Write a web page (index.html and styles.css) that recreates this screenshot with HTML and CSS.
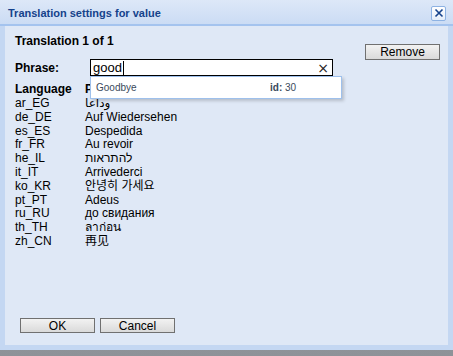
FILE: index.html
```html
<!DOCTYPE html>
<html lang="en">

<head>
    <meta charset="UTF-8">
    <meta name="viewport" content="width=device-width, initial-scale=1.0">
    <title>Translation settings for value</title>
    <link rel="stylesheet" href="styles.css">
</head>

<body>
    <div class="window">
        <div class="titlebar">
            <span class="title">Translation settings for value</span>
            <span class="close-btn">
                <svg width="10" height="10" viewBox="0 0 10 10">
                    <path d="M1.5 1.5 L8.5 8.5 M8.5 1.5 L1.5 8.5" stroke="#15428b" stroke-width="1.6" fill="none"/>
                </svg>
            </span>
        </div>

        <div class="window-body">
            <div class="top-row">
                <div class="heading">Translation 1 of 1</div>
                <button class="btn btn-remove">Remove</button>
            </div>

            <div class="phrase-row">
                <label class="label">Phrase:</label>
                <div class="combo">
                    <div class="combo-input">
                        <span class="combo-text">good</span><span class="caret"></span>
                        <span class="clear">×</span>
                    </div>
                    <div class="combo-list">
                        <span class="item-name">Goodbye</span>
                        <span class="item-id"><b>id:</b> 30</span>
                    </div>
                </div>
            </div>

            <table class="lang-table">
                <tr><th>Language</th><th>Phrase</th></tr>
                <tr><td>ar_EG</td><td>وداعا</td></tr>
                <tr><td>de_DE</td><td>Auf Wiedersehen</td></tr>
                <tr><td>es_ES</td><td>Despedida</td></tr>
                <tr><td>fr_FR</td><td>Au revoir</td></tr>
                <tr><td>he_IL</td><td>להתראות</td></tr>
                <tr><td>it_IT</td><td>Arrivederci</td></tr>
                <tr><td>ko_KR</td><td lang="ko">안녕히 가세요</td></tr>
                <tr><td>pt_PT</td><td>Adeus</td></tr>
                <tr><td>ru_RU</td><td>до свидания</td></tr>
                <tr><td>th_TH</td><td>ลาก่อน</td></tr>
                <tr><td>zh_CN</td><td lang="zh-CN">再见</td></tr>
            </table>

            <div class="footer">
                <button class="btn">OK</button>
                <button class="btn">Cancel</button>
            </div>
        </div>
    </div>
</body>

</html>
```

FILE: styles.css
```css
body {
  margin: 0px;
  width: 453px;
  height: 356px;
  overflow: hidden;
  background: linear-gradient(#b9bcc2, #8e9298);
  font-family: "Liberation Sans", Arial, "DejaVu Sans", "Noto Sans CJK KR", sans-serif;
  font-size: 12px;
  color: #000;
}

.window {
  position: relative;
  width: 453px;
  height: 350px;
  display: flex;
  flex-direction: column;
  background-color: #c4d7f2;
}

.titlebar {
  height: 24px;
  display: flex;
  align-items: center;
  justify-content: space-between;
  padding: 0px 7px 0px 8px;
  background: linear-gradient(#dde8f8, #cbdcf4);
  border-bottom: 2px solid #a4c3ee;
}

.title {
  font-size: 11px;
  font-weight: bold;
  color: #15428b;
  margin-top: 1px;
}

.close-btn {
  width: 13px;
  height: 13px;
  display: flex;
  justify-content: center;
  align-items: center;
  border: 1px solid #8db2e3;
  border-radius: 2px;
  background: linear-gradient(#ffffff, #e4edf9);
  margin-top: 2px;
}

.window-body {
  flex: 1;
  display: flex;
  flex-direction: column;
  margin: 0px 5px 5px 5px;
  padding: 8px 10px 12px 10px;
  background-color: #dfe8f6;
}

.top-row {
  display: flex;
  justify-content: space-between;
  align-items: flex-start;
  height: 25px;
}

.heading {
  font-weight: bold;
  line-height: 14px;
}

.btn {
  width: 75px;
  height: 15px;
  padding: 0px;
  font-family: "Liberation Sans", Arial, sans-serif;
  font-size: 12px;
  line-height: 12px;
  color: #000;
  border: 1px solid #707070;
  background: linear-gradient(#f2f2f2, #dadada);
}

.btn-remove {
  height: 16px;
  margin-top: 10px;
  margin-right: -2px;
}

.phrase-row {
  display: flex;
  align-items: center;
}

.label {
  width: 75px;
  font-weight: bold;
}

.combo {
  position: relative;
}

.combo-input {
  width: 239px;
  height: 15px;
  display: flex;
  align-items: center;
  border: 1px solid #000;
  background-color: #fff;
  padding-left: 2px;
}

.combo-text {
  font-size: 13px;
}

.caret {
  width: 1px;
  height: 14px;
  background-color: #000;
  margin-left: 1px;
}

.clear {
  margin-left: auto;
  margin-right: 3px;
  font-family: "DejaVu Sans", sans-serif;
  font-size: 14px;
  line-height: 14px;
  color: #222;
}

.combo-list {
  position: absolute;
  top: 17px;
  left: 0;
  width: 250px;
  height: 21px;
  display: flex;
  align-items: center;
  border: 1px solid #9ec0ec;
  background-color: #fff;
  box-shadow: 2px 2px 3px rgba(0, 0, 0, 0.18);
  font-size: 10px;
  color: #3a4a5c;
  z-index: 5;
}

.item-name {
  width: 174px;
  padding-left: 5px;
}

.item-id b {
  font-weight: bold;
}

.lang-table {
  border-collapse: collapse;
  margin-top: 6px;
}

.lang-table th,
.lang-table td {
  padding: 0px;
  text-align: left;
  line-height: 13.8px;
  height: 13.8px;
  white-space: nowrap;
}

.lang-table th {
  font-weight: bold;
  height: 15px;
}

.lang-table th:first-child,
.lang-table td:first-child {
  width: 70px;
}

.footer {
  margin-top: auto;
  display: flex;
  gap: 5px;
  padding-left: 5px;
}
```
